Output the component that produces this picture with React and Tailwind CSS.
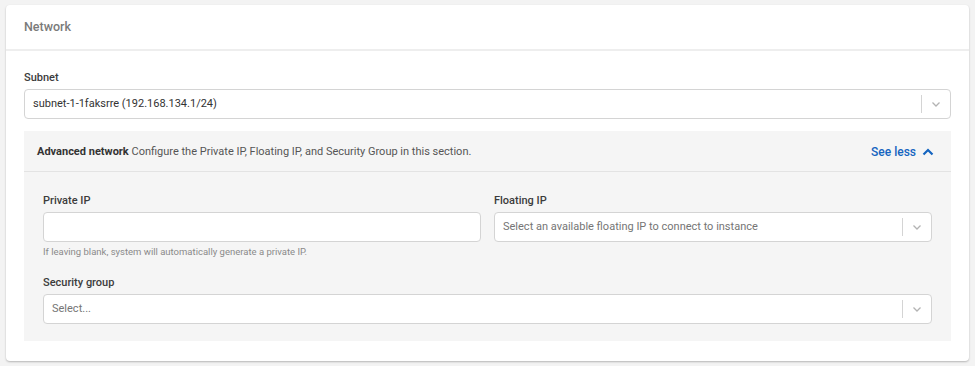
import React from 'react';

const font = { fontFamily: 'Roboto, "Liberation Sans", sans-serif' };

const Chevron = () => (
  <svg width="12" height="12" viewBox="0 0 12 12" fill="none" stroke="#b3b3b3" strokeWidth="1.3">
    <path d="M2.5 4.5 L6 8 L9.5 4.5" />
  </svg>
);

const SelectBox = ({ value, placeholder }) => (
  <div className="h-[30px] flex items-center bg-white border border-[#d4d4d4] rounded-[4px]">
    <div className={`flex-1 pl-[8px] text-[11px] ${value ? 'text-[#333333]' : 'text-[#757575]'}`}>
      {value || placeholder}
    </div>
    <div className="w-px h-[18px] bg-[#d4d4d4]" />
    <div className="w-[28px] flex justify-center">
      <Chevron />
    </div>
  </div>
);

const Label = ({ children }) => (
  <div className="text-[11px] leading-[16px] font-medium text-[#3c3c3c] mb-[3px]">{children}</div>
);

const App = () => {
  return (
    <div className="bg-[#f3f3f3] w-[975px] h-[366px] pt-[5px] px-[6px]" style={font}>
      <div className="bg-white rounded-[4px] shadow-[0_1px_2px_rgba(0,0,0,0.25)] w-[963px]">
        <div className="h-[46px] px-[18px] flex items-center border-b-2 border-[#eeeeee]">
          <span className="text-[12.5px] font-medium text-[#7a7a7a]">Network</span>
        </div>

        <div className="px-[18px] pt-[19px] pb-[20px]">
          <Label>Subnet</Label>
          <SelectBox value="subnet-1-1faksrre (192.168.134.1/24)" />

          {/* Advanced network */}
          <div className="mt-[12px] bg-[#f5f5f5]">
            <div className="h-[41px] px-[13px] flex items-center justify-between border-b border-[#e3e3e3]">
              <div className="text-[11px] text-[#555555] pt-[2px]">
                <span className="font-bold text-[#333333]">Advanced network</span>{' '}
                Configure the Private IP, Floating IP, and Security Group in this section.
              </div>
              <button className="flex items-center gap-[6px] text-[12px] font-medium text-[#1565c0] mr-[4px] pt-[2px]">
                See less
                <svg width="12" height="12" viewBox="0 0 12 12" fill="none" stroke="#1565c0" strokeWidth="2.2">
                  <path d="M1.5 8.5 L6 4 L10.5 8.5" />
                </svg>
              </button>
            </div>

            <div className="px-[19px] pt-[21px] pb-[17px]">
              <div className="grid grid-cols-2 gap-x-[13px]">
                <div>
                  <Label>Private IP</Label>
                  <div className="h-[30px] bg-white border border-[#d4d4d4] rounded-[4px]" />
                  <div className="mt-[4px] text-[9.5px] leading-[12px] text-[#8a8a8a]">
                    If leaving blank, system will automatically generate a private IP.
                  </div>
                </div>
                <div>
                  <Label>Floating IP</Label>
                  <SelectBox placeholder="Select an available floating IP to connect to instance" />
                </div>
              </div>

              <div className="mt-[17px]">
                <Label>Security group</Label>
                <SelectBox placeholder="Select..." />
              </div>
            </div>
          </div>
        </div>
      </div>
    </div>
  );
};

export default App;
